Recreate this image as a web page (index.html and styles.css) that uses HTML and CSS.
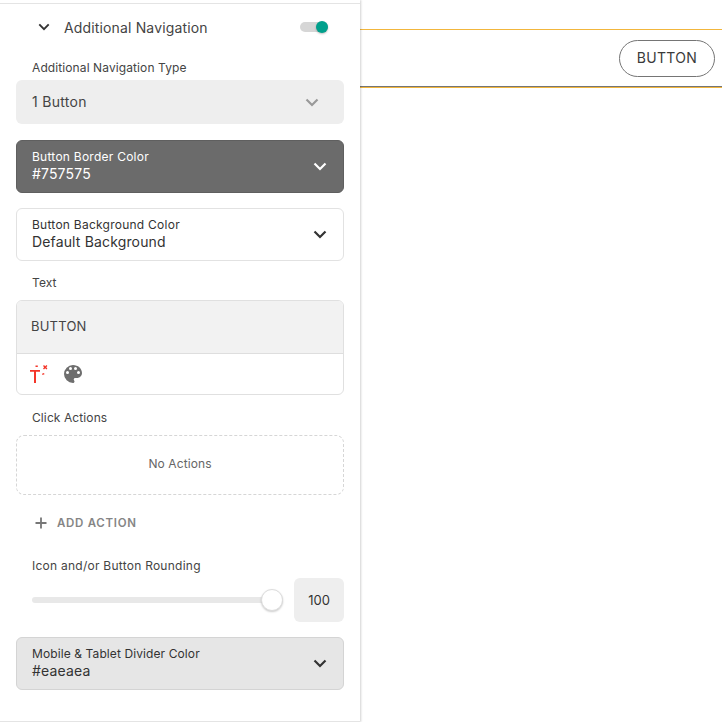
FILE: index.html
```html
<!DOCTYPE html>
<html lang="en">
<head>
<meta charset="utf-8">
<title>Additional Navigation</title>
<link rel="stylesheet" href="styles.css">
</head>
<body>
<div class="app">
  <aside class="panel">
    <div class="section-head">
      <svg class="chev head-chev" viewBox="0 0 14 9"><path d="M1.5 1.5 7 7l5.5-5.5" /></svg>
      <span class="section-title">Additional Navigation</span>
      <span class="toggle"><span class="knob"></span></span>
    </div>
    <div class="label first-label">Additional Navigation Type</div>
    <div class="select">
      <span class="select-text">1 Button</span>
      <svg class="chev grey-chev" viewBox="0 0 14 9"><path d="M1.5 1.5 7 7l5.5-5.5" /></svg>
    </div>
    <div class="color color-dark">
      <div class="color-text"><span class="color-name">Button Border Color</span><span class="color-value">#757575</span></div>
      <svg class="chev" viewBox="0 0 14 9"><path d="M1.5 1.5 7 7l5.5-5.5" /></svg>
    </div>
    <div class="color color-white">
      <div class="color-text"><span class="color-name">Button Background Color</span><span class="color-value">Default Background</span></div>
      <svg class="chev" viewBox="0 0 14 9"><path d="M1.5 1.5 7 7l5.5-5.5" /></svg>
    </div>
    <div class="label text-label">Text</div>
    <div class="text-box">
      <div class="text-input">BUTTON</div>
      <div class="text-tools">
        <svg class="tool-t" viewBox="0 0 20 20" fill="#f4362a"><path d="M1 6h10v1.800H7V19H5V7.800H1z"/><path d="M14 2l1-1 1.200 1.200L17.400 1l1 1-1.200 1.200 1.200 1.200-1 1-1.200-1.200L15 5.400l-1-1 1.200-1.200z"/><path d="M6.500 1.500h2.300v1.500H6.500zM13 9.800l2-.8.500 1.200-2 .8z"/></svg>
        <svg class="tool-palette" viewBox="0 0 24 24" fill="#6e6e6e"><path d="M12 3a9 9 0 0 0 0 18c.83 0 1.500-.67 1.500-1.500 0-.39-.15-.74-.39-1.010-.23-.26-.38-.61-.38-.99 0-.83.67-1.500 1.500-1.500H16c2.760 0 5-2.240 5-5 0-4.420-4.030-8-9-8zm-5.500 9a1.500 1.500 0 1 1 0-3 1.500 1.500 0 0 1 0 3zm3-4a1.500 1.500 0 1 1 0-3 1.500 1.500 0 0 1 0 3zm5 0a1.500 1.500 0 1 1 0-3 1.500 1.500 0 0 1 0 3zm3 4a1.500 1.500 0 1 1 0-3 1.500 1.500 0 0 1 0 3z"/></svg>
      </div>
    </div>
    <div class="label actions-label">Click Actions</div>
    <div class="no-actions">No Actions</div>
    <div class="add-action">
      <svg class="plus" viewBox="0 0 12 12"><path d="M6 .5v11M.5 6h11"/></svg>
      <span>ADD ACTION</span>
    </div>
    <div class="label rounding-label">Icon and/or Button Rounding</div>
    <div class="slider-row">
      <div class="track"><span class="thumb"></span></div>
      <div class="slider-value">100</div>
    </div>
    <div class="color color-light">
      <div class="color-text"><span class="color-name">Mobile &amp; Tablet Divider Color</span><span class="color-value">#eaeaea</span></div>
      <svg class="chev" viewBox="0 0 14 9"><path d="M1.5 1.5 7 7l5.5-5.5" /></svg>
    </div>
  </aside>
  <main class="canvas">
    <div class="nav-bar">
      <a class="nav-button">BUTTON</a>
    </div>
  </main>
</div>
</body>
</html>
```
FILE: styles.css
```css
* { box-sizing: border-box; }
html, body { margin: 0; height: 100%; background: #fff; }
body { font-family: Inter, "Open Sans", sans-serif; color: #3a3a3a; overflow: hidden; }
.app { display: flex; height: 722px; }

.panel {
  width: 360px;
  flex: none;
  padding: 3px 16px 0;
  box-shadow: 1px 0 2px rgba(0,0,0,.18);
  position: relative;
  z-index: 1;
  display: flex;
  flex-direction: column;
  background: #fff;
}
.panel::before {
  content: "";
  position: absolute;
  left: 0; right: 0; top: 3px;
  border-top: 1px solid #e4e4e4;
}
.panel::after {
  content: "";
  position: absolute;
  left: 0; right: 0; bottom: 0;
  border-top: 1px solid #e4e4e4;
}

.chev { width: 14px; height: 9px; flex: none; fill: none; stroke: #333; stroke-width: 2.200; }

.section-head { display: flex; align-items: center; height: 48px; padding-left: 22px; }
.head-chev { width: 12px; height: 8px; }
.section-title { margin-left: 14px; font-size: 14px; color: #444; letter-spacing: .15px; flex: 1; }
.toggle { width: 28px; height: 10px; margin-right: 16px; border-radius: 5px; background: #d6d6d6; position: relative; }
.knob { position: absolute; right: 0; top: -1px; width: 12px; height: 12px; border-radius: 50%; background: #00a08c; box-shadow: 0 1px 2px rgba(0,0,0,.25); }

.label { font-size: 12px; color: #444; padding-left: 16px; line-height: 14px; letter-spacing: .1px; }
.first-label { margin-top: 10px; }

.select {
  margin-top: 5px;
  height: 44px;
  background: #eeeeee;
  border-radius: 6px;
  display: flex;
  align-items: center;
  justify-content: space-between;
  padding: 0 25px 0 16px;
  font-size: 14px;
  color: #444;
  letter-spacing: .3px;
}
.select-text { margin-bottom: 1px; }
.grey-chev { stroke: #999; }

.color {
  height: 53px;
  border-radius: 6px;
  border: 1px solid #e2e2e2;
  display: flex;
  align-items: center;
  justify-content: space-between;
  padding: 0 16px 0 15px;
}
.color-text { display: flex; flex-direction: column; padding-bottom: 1px; }
.color-name { font-size: 12px; line-height: 16px; letter-spacing: .25px; }
.color-value { font-size: 14px; line-height: 18px; letter-spacing: .15px; }
.color-dark { margin-top: 16px; background: #6b6b6b; border-color: #5f5f5f; color: #fff; }
.color-dark .chev { stroke: #fff; }
.color-white { margin-top: 15px; background: #fff; color: #333; }
.color-light { margin-top: 15px; background: #e6e6e6; border-color: #d4d4d4; color: #333; }
.color-light .color-name { letter-spacing: .1px; }

.text-label { margin-top: 15px; }
.text-box { margin-top: 10px; height: 95px; border: 1px solid #e0e0e0; border-radius: 6px; overflow: hidden; display: flex; flex-direction: column; }
.text-input { height: 53px; flex: none; background: #f2f2f2; border-bottom: 1px solid #dedede; display: flex; align-items: center; padding: 0 0 2px 14px; font-size: 13px; color: #444; letter-spacing: .2px; }
.text-tools { flex: 1; display: flex; align-items: center; padding-left: 12px; gap: 12px; }
.tool-t { width: 20px; height: 20px; }
.tool-palette { width: 24px; height: 24px; }

.actions-label { margin-top: 16px; }
.no-actions {
  margin-top: 10px;
  height: 60px;
  border: 1px dashed #d6d6d6;
  border-radius: 8px;
  display: flex;
  align-items: center;
  justify-content: center;
  padding-bottom: 3px;
  font-size: 12px;
  color: #666;
  letter-spacing: .1px;
}
.add-action { display: flex; align-items: center; height: 56px; padding-left: 19px; gap: 10px; font-size: 11.500px; font-weight: 600; color: #858585; letter-spacing: .7px; }
.plus { width: 12px; height: 12px; fill: none; stroke: #777; stroke-width: 1.800; flex: none; }

.rounding-label { margin-top: 8px; letter-spacing: .25px; }
.slider-row { display: flex; align-items: center; margin-top: 5px; padding-left: 16px; }
.track { flex: 1; height: 6px; border-radius: 3px; background: #e8e8e8; position: relative; margin-right: 11px; }
.thumb { position: absolute; right: 0; top: -8px; width: 22px; height: 22px; border-radius: 50%; background: #fff; border: 1px solid #ddd; box-shadow: 0 1px 2px rgba(0,0,0,.2); }
.slider-value { width: 50px; height: 44px; background: #eeeeee; border-radius: 6px; display: flex; align-items: center; justify-content: center; font-size: 13px; color: #333; }

.canvas { flex: 1; min-width: 0; padding-top: 29px; }
.nav-bar {
  height: 59px;
  border-top: 1px solid #f2b63c;
  border-bottom: 1px solid #f2b63c;
  box-shadow: inset 0 -1px 0 #757575;
  display: flex;
  align-items: center;
  justify-content: flex-end;
  padding-right: 7px;
}
.nav-button {
  width: 96px;
  height: 37px;
  border: 1px solid #757575;
  border-radius: 19px;
  display: flex;
  align-items: center;
  justify-content: center;
  padding-bottom: 3px;
  font-size: 14px;
  color: #3a3a3a;
  letter-spacing: .3px;
}
```
